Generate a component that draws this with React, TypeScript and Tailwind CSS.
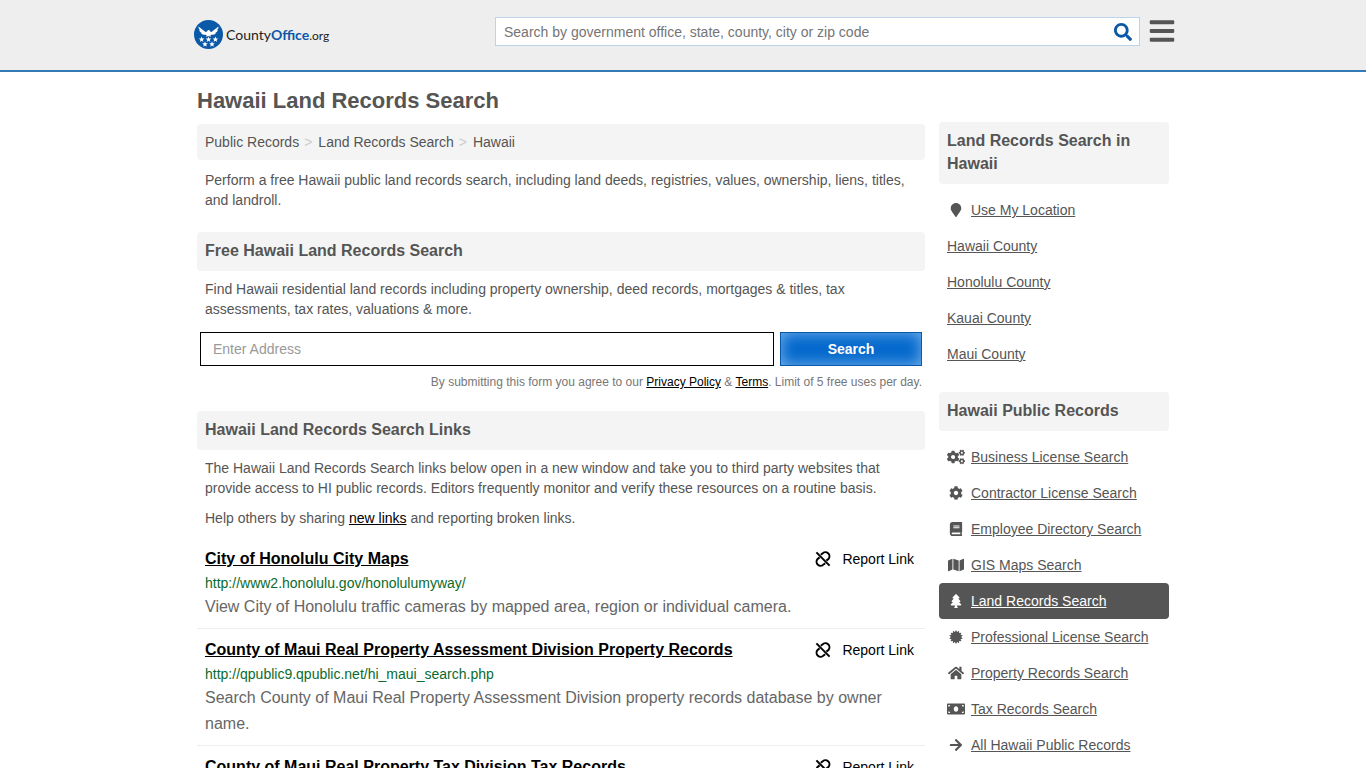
import React from "react";
import {
  FaArrowRight,
  FaBars,
  FaBook,
  FaCog,
  FaCogs,
  FaHome,
  FaMap,
  FaMapMarker,
  FaMoneyBill,
  FaSearch,
  FaTree,
} from "react-icons/fa";

interface IconProps {
  className?: string;
}

interface SideLinkProps {
  label: string;
  icon?: React.ComponentType<IconProps>;
  iconSize?: string;
  active?: boolean;
}

interface RecordLink {
  title: string;
  url?: string;
  description?: string;
}

// 14 pointed seal
const sealPoints = Array.from({ length: 28 }, (_, i) => {
  const radius = i % 2 === 0 ? 8 : 5.8;
  const angle = (i * Math.PI) / 14;
  const x = 8 + radius * Math.sin(angle);
  const y = 8 - radius * Math.cos(angle);
  return `${x.toFixed(2)},${y.toFixed(2)}`;
}).join(" ");

const SealIcon: React.FC<IconProps> = ({ className }) => (
  <svg viewBox="0 0 16 16" fill="currentColor" className={className} aria-hidden="true">
    <polygon points={sealPoints} />
  </svg>
);

const BrokenLinkIcon: React.FC<IconProps> = ({ className }) => (
  <svg
    viewBox="0 0 16 16"
    fill="none"
    stroke="currentColor"
    strokeWidth="2"
    className={className}
    aria-hidden="true"
  >
    <path d="M1.4 1.4 L14.6 14.6" />
    <path d="M5.8 3.8 L7.4 2.6 A3.9 3.9 0 0 1 13.4 8 L11.4 9.6" />
    <path d="M10.2 12.2 L8.6 13.4 A3.9 3.9 0 0 1 2.6 8 L4.6 6.4" />
  </svg>
);

const countyLinks: SideLinkProps[] = [
  { label: "Use My Location", icon: FaMapMarker },
  { label: "Hawaii County" },
  { label: "Honolulu County" },
  { label: "Kauai County" },
  { label: "Maui County" },
];

const publicRecordLinks: SideLinkProps[] = [
  { label: "Business License Search", icon: FaCogs, iconSize: "size-[18px]" },
  { label: "Contractor License Search", icon: FaCog },
  { label: "Employee Directory Search", icon: FaBook },
  { label: "GIS Maps Search", icon: FaMap, iconSize: "size-4" },
  { label: "Land Records Search", icon: FaTree, active: true },
  { label: "Professional License Search", icon: SealIcon },
  { label: "Property Records Search", icon: FaHome, iconSize: "size-4" },
  { label: "Tax Records Search", icon: FaMoneyBill, iconSize: "size-[18px]" },
  { label: "All Hawaii Public Records", icon: FaArrowRight },
];

const recordLinks: RecordLink[] = [
  {
    title: "City of Honolulu City Maps",
    url: "http://www2.honolulu.gov/honolulumyway/",
    description:
      "View City of Honolulu traffic cameras by mapped area, region or individual camera.",
  },
  {
    title: "County of Maui Real Property Assessment Division Property Records",
    url: "http://qpublic9.qpublic.net/hi_maui_search.php",
    description:
      "Search County of Maui Real Property Assessment Division property records database by owner name.",
  },
  { title: "County of Maui Real Property Tax Division Tax Records" },
];

const stars = [
  [7.6, 19.4],
  [14.5, 19.4],
  [21.4, 19.4],
  [11, 24.2],
  [18, 24.2],
];

const Logo: React.FC = () => (
  <a href="#" className="flex items-center gap-[3px] text-[#222]" aria-label="CountyOffice.org">
    <svg viewBox="0 0 29 29" className="size-[29px]" aria-hidden="true">
      <circle cx="14.5" cy="14.5" r="14.5" fill="#0a58a8" />
      <path
        fill="#fff"
        d="M4.4 6.6 L11.6 11.9 L13 11.6 L14 10.1 L15.7 10.3 L16.2 11.6 L17.4 11.9 L24.6 6.6 C24.5 8.2 23.9 9.4 23 10.2 L23.9 10.1 C23.3 11.7 22.3 12.6 21.2 13 L21.9 13.2 C20.7 14.5 19 15 17.3 14.8 L16.4 15.2 L17 16.8 L14.5 16.1 L12 16.8 L12.6 15.2 L11.7 14.8 C10 15 8.3 14.5 7.1 13.2 L7.8 13 C6.7 12.6 5.7 11.7 5.1 10.1 L6 10.2 C5.1 9.4 4.5 8.2 4.4 6.6 Z"
      />
      {stars.map(([x, y]) => (
        <path
          key={`${x}-${y}`}
          transform={`translate(${x} ${y})`}
          fill="#fff"
          d="M0 -2.8 L0.8 -0.9 L2.8 -0.9 L1.2 0.5 L1.8 2.5 L0 1.3 L-1.8 2.5 L-1.2 0.5 L-2.8 -0.9 L-0.8 -0.9 Z"
        />
      ))}
    </svg>
    <span className="pt-0.5 font-[Lato,sans-serif] text-[14px] leading-5">
      County<b className="text-[#0a58a8]">Office</b>
      <span className="text-[12px]">.org</span>
    </span>
  </a>
);

const SectionTitle: React.FC<{ children: React.ReactNode }> = ({ children }) => (
  <h2 className="rounded bg-[#f4f4f4] px-2 pt-[7px] pb-[9px] text-[16px] leading-[23px] font-bold">
    {children}
  </h2>
);

const SideLink: React.FC<SideLinkProps> = ({
  label,
  icon: Icon,
  iconSize = "size-[14px]",
  active,
}) => (
  <li>
    <a
      href="#"
      className={`flex h-9 items-center gap-1.5 rounded px-2 ${
        active ? "bg-[#555] text-white" : ""
      }`}
    >
      {Icon && (
        <span className="flex w-[18px] justify-center">
          <Icon className={iconSize} />
        </span>
      )}
      <span className="underline">{label}</span>
    </a>
  </li>
);

const RecordItem: React.FC<{ record: RecordLink }> = ({ record }) => (
  <li className="border-b border-[#eee] px-2 py-2">
    <div className="flex items-center justify-between pr-[3px] pb-px">
      <h3 className="text-[16px] leading-[26px] font-bold text-black">
        <a href="#" className="underline">
          {record.title}
        </a>
      </h3>
      <button type="button" className="flex items-center gap-[11px] text-black">
        <BrokenLinkIcon className="size-4" />
        Report Link
      </button>
    </div>
    {record.url && <p className="leading-[21px] text-[#0a6b2d]">{record.url}</p>}
    {record.description && (
      <p className="text-[16px] leading-[26px] text-[#666]">{record.description}</p>
    )}
  </li>
);

const App: React.FC = () => {
  return (
    <div className="font-['Liberation_Sans',Arial,sans-serif] text-[14px] leading-5 text-[#555]">
      <header className="border-b-2 border-[#337ab7] bg-[#eee]">
        <div className="mx-auto flex h-[70px] max-w-[986px] items-start justify-between pl-1">
          <div className="pt-5">
            <Logo />
          </div>
          <div className="flex items-start gap-2 pt-[17px]">
            <form className="flex h-[29px] w-[645px] items-center border border-[#bcd4ea] bg-white">
              <input
                type="text"
                aria-label="Search by government office, state, county, city or zip code"
                placeholder="Search by government office, state, county, city or zip code"
                className="min-w-0 flex-1 px-2 outline-none placeholder:text-[#757575]"
              />
              <button type="submit" aria-label="Search" className="px-[7px] text-[#0a58a8]">
                <FaSearch className="size-[18px]" />
              </button>
            </form>
            <button type="button" aria-label="Menu">
              <FaBars className="size-7" />
            </button>
          </div>
        </div>
      </header>

      <div className="mx-auto flex max-w-[972px] items-start gap-[14px]">
        <main className="min-w-0 flex-1">
          <h1 className="pt-3.5 pb-2 text-[22px] leading-[30px] font-bold">
            Hawaii Land Records Search
          </h1>
          <nav aria-label="Breadcrumb" className="flex rounded bg-[#f4f4f4] p-2">
            <a href="#">Public Records</a>
            <span className="pr-1.5 pl-[5px] text-[#ccc]">&gt;</span>
            <a href="#">Land Records Search</a>
            <span className="pr-1.5 pl-[5px] text-[#ccc]">&gt;</span>
            <a href="#">Hawaii</a>
          </nav>
          <p className="px-2 pt-2.5 pb-[22px]">
            Perform a free Hawaii public land records search, including land deeds, registries,
            values, ownership, liens, titles, and landroll.
          </p>

          <SectionTitle>Free Hawaii Land Records Search</SectionTitle>
          <p className="px-2 pt-2 pb-[13px]">
            Find Hawaii residential land records including property ownership, deed records,
            mortgages &amp; titles, tax assessments, tax rates, valuations &amp; more.
          </p>
          <form className="px-[3px] pb-[19px]">
            <div className="flex gap-1.5">
              <input
                type="text"
                aria-label="Enter Address"
                placeholder="Enter Address"
                className="h-[34px] min-w-0 flex-1 border border-black px-3 outline-none placeholder:text-[#999]"
              />
              <button
                type="submit"
                className="h-[34px] w-[142px] border border-[#0a58a8] bg-[#0468cc] font-bold text-white shadow-[inset_0_0_15px_#78b4ec]"
              >
                Search
              </button>
            </div>
            <p className="pt-[7px] text-right text-[12px] leading-[19px] text-[#777]">
              By submitting this form you agree to our{" "}
              <a href="#" className="text-black underline">
                Privacy Policy
              </a>{" "}
              &amp;{" "}
              <a href="#" className="text-black underline">
                Terms
              </a>
              . Limit of 5 free uses per day.
            </p>
          </form>

          <SectionTitle>Hawaii Land Records Search Links</SectionTitle>
          <p className="px-2 pt-2">
            The Hawaii Land Records Search links below open in a new window and take you to third
            party websites that provide access to HI public records. Editors frequently monitor and
            verify these resources on a routine basis.
          </p>
          <p className="px-2 py-2.5">
            Help others by sharing{" "}
            <a href="#" className="text-black underline">
              new links
            </a>{" "}
            and reporting broken links.
          </p>
          <ul>
            {recordLinks.map((record) => (
              <RecordItem key={record.title} record={record} />
            ))}
          </ul>
        </main>

        <aside className="w-[230px] pt-[50px]">
          <SectionTitle>Land Records Search in Hawaii</SectionTitle>
          <ul className="pt-2 pb-5">
            {countyLinks.map((link) => (
              <SideLink key={link.label} {...link} />
            ))}
          </ul>
          <SectionTitle>Hawaii Public Records</SectionTitle>
          <ul className="pt-2">
            {publicRecordLinks.map((link) => (
              <SideLink key={link.label} {...link} />
            ))}
          </ul>
        </aside>
      </div>
    </div>
  );
};

export default App;
